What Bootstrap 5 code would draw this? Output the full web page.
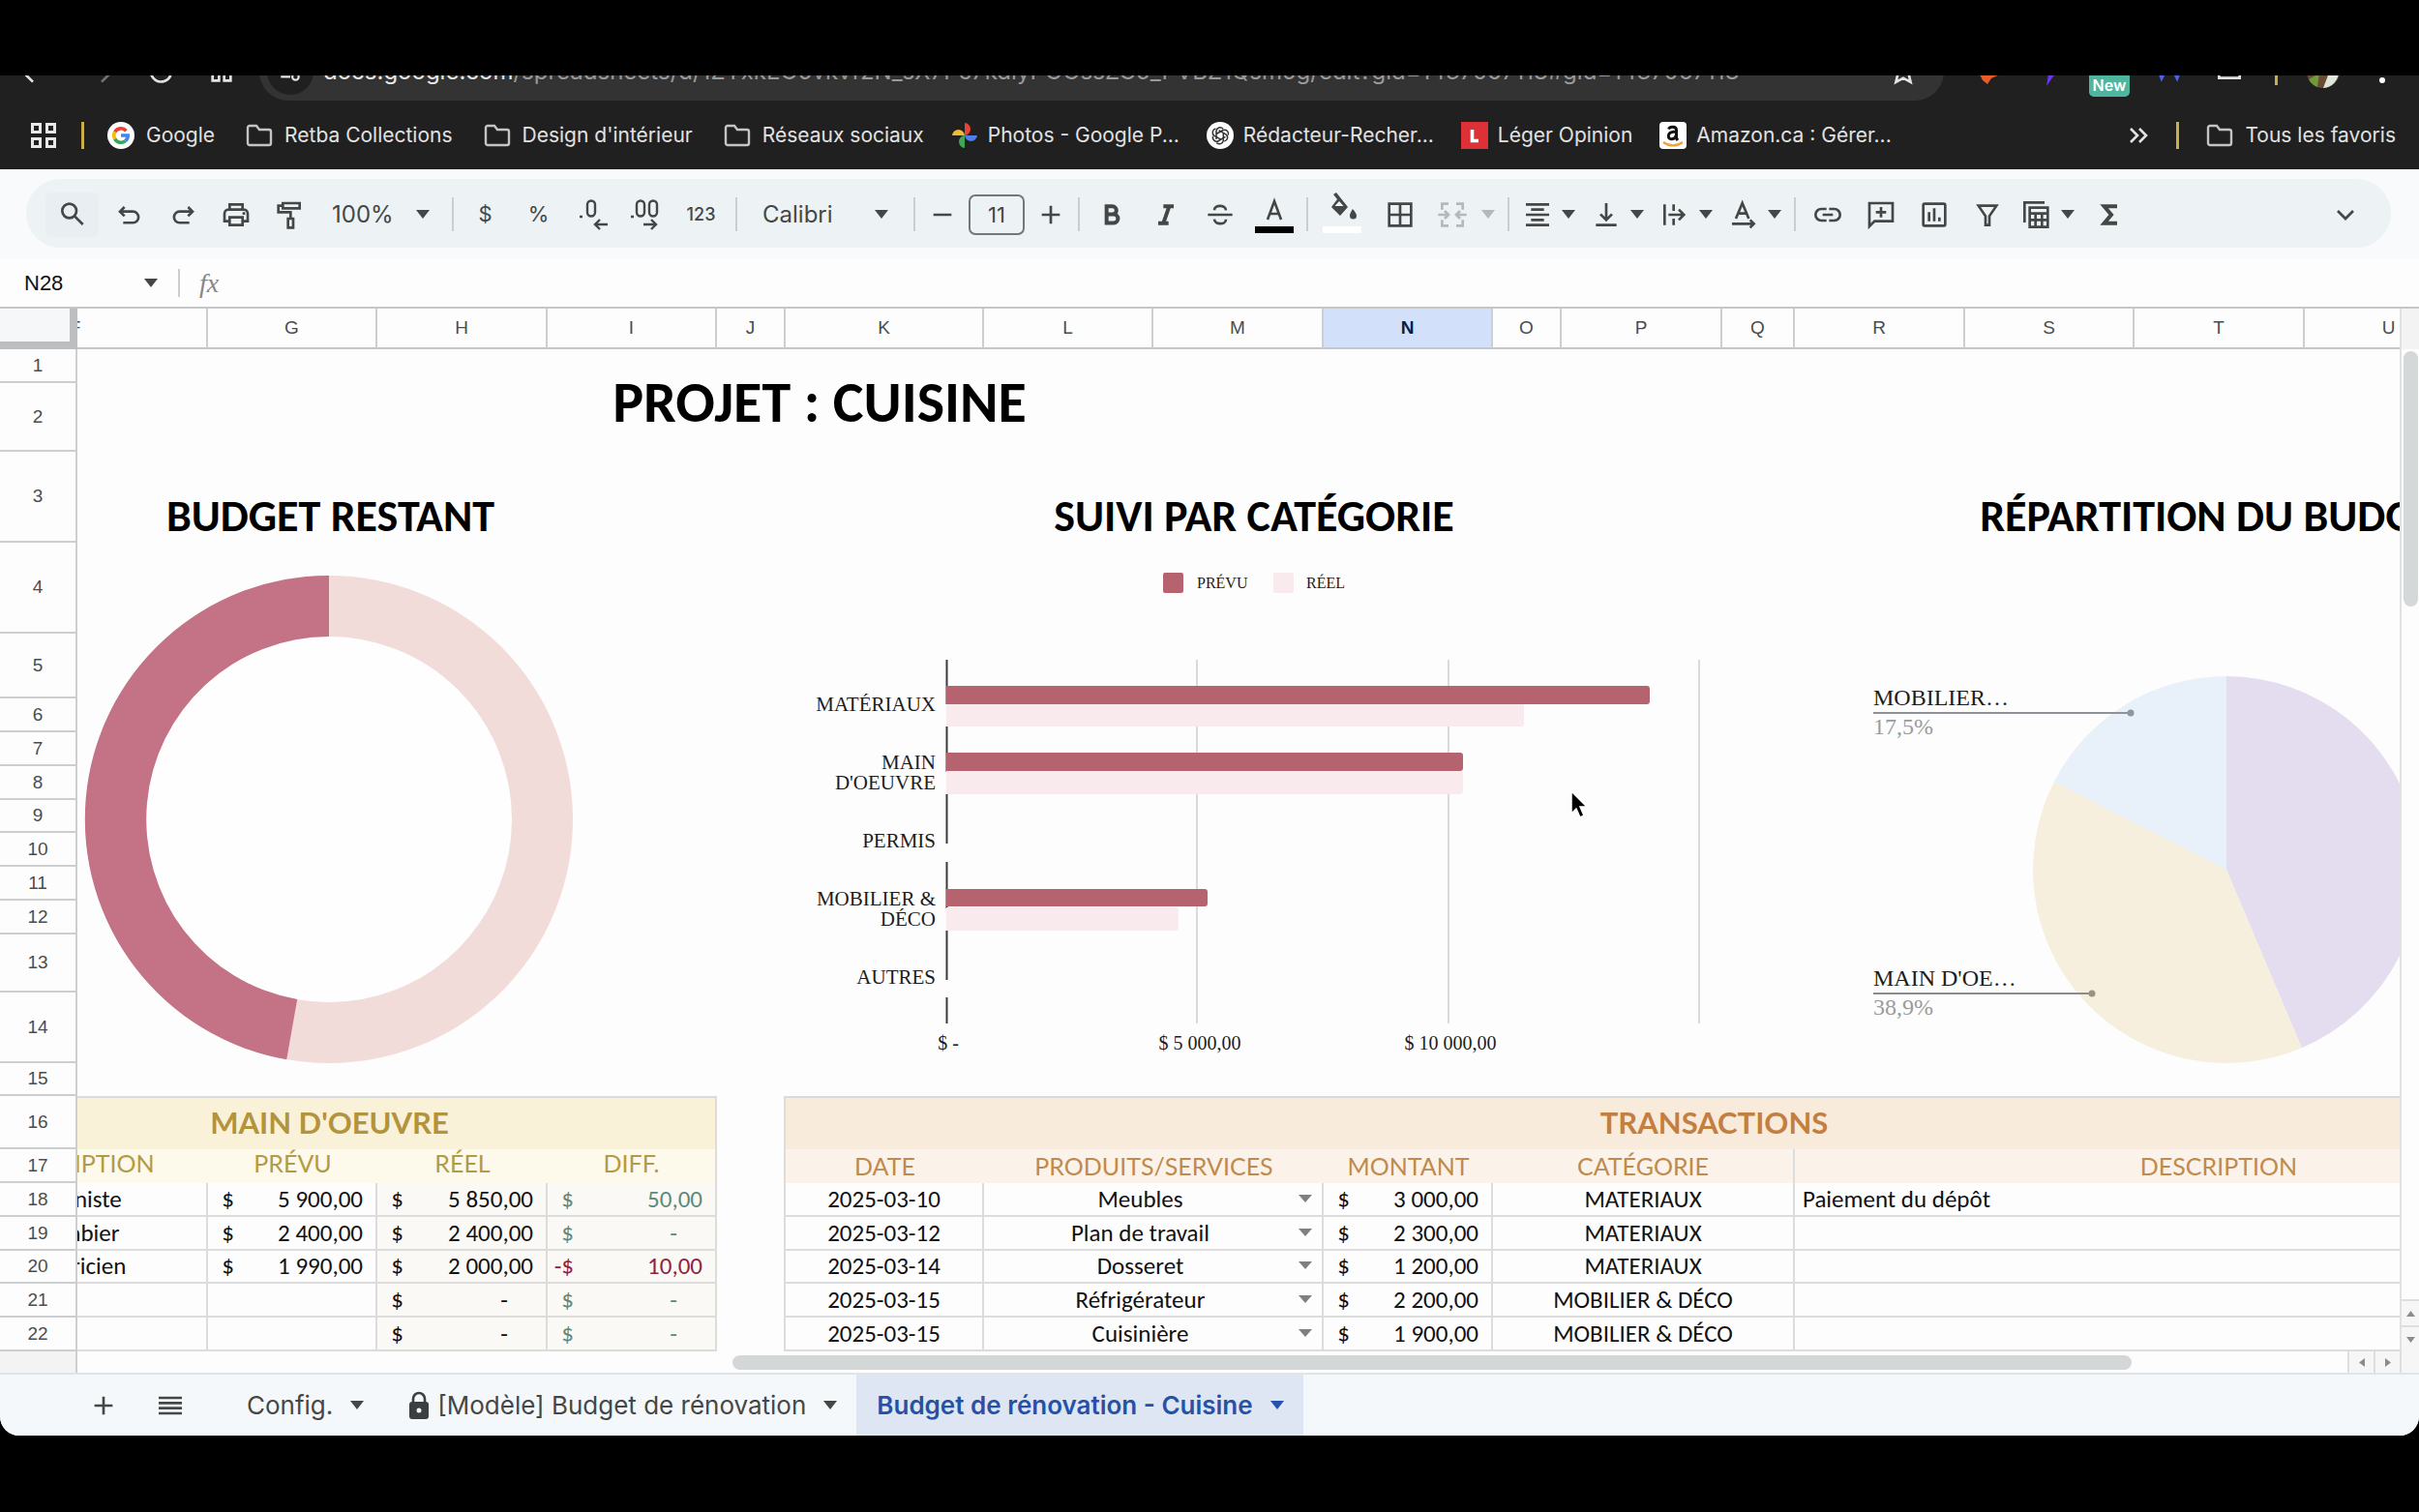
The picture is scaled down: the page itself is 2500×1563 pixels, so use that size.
<!DOCTYPE html>
<html lang="fr">
<head>
<meta charset="utf-8">
<meta name="viewport" content="width=device-width, initial-scale=1">
<title>Budget de rénovation - Cuisine</title>
<link href="https://cdn.jsdelivr.net/npm/bootstrap@5.3.0/dist/css/bootstrap.min.css" rel="stylesheet">
<style>
  body{background:#000;padding:78px 0 79px;font-family:Inter,"Liberation Sans",sans-serif;color:#444746;overflow-x:hidden}
  svg{display:block;flex:none}
  button,select,input{font-family:inherit;color:inherit}
  .app{background:#fdfdfd;border-radius:0 0 20px 20px;overflow:hidden}
  .ico{width:32px;height:32px;fill:none;stroke:currentColor;stroke-width:2}
  .caret{width:14px;height:9px;fill:currentColor}

  /* browser chrome */
  .browser{background:#202020;color:#e3e3e3;overflow:hidden}
  .nav-row{height:60px;margin-top:-34px;padding:0 8px 0 18px}
  .nav-btn{width:62px;padding:0;border:0;background:none;color:#e3e3e3;display:flex;justify-content:center}
  .address{background:#333;border-radius:30px;height:60px;padding:0 26px 0 8px;gap:10px}
  .site-info{width:48px;height:48px;border-radius:50%;background:#202020}
  .url{font-size:24px;color:#9a9a9a;white-space:nowrap}
  .url b{font-weight:400;color:#e8e8e8}
  .ext{width:62px}
  .new-tag{background:#4fb59f;color:#fff;font-size:16px;line-height:16px;font-weight:600;border-radius:5px;padding:8px 4px 4px}
  .marks{height:71px;padding:0 24px 0 30px;font-size:21px;gap:32px}
  .marks a{color:#e2e2e2;text-decoration:none;display:flex;align-items:center;gap:12px;white-space:nowrap}
  .marks a.site{gap:10px;margin-left:-4px}
  .rule{width:3px;height:28px;background:#c9ae4a}
  .marks .lead-rule{margin:0 -8px}

  /* toolbar */
  .tools-zone{background:#f8fafc;padding:10px 29px 12px 27px}
  .tools{background:#edf2f5;border-radius:36px;height:71px;padding:2px 20px 0}
  .tb{width:55px;height:46px;padding:0;border:0;border-radius:6px;background:none;display:flex;align-items:center;justify-content:center;font-size:22px;flex:none}
  .tb.find{background:#e9eef3;margin-right:4px}
  .tb.fmt{width:56px}
  .tb.cellfmt{width:60px}
  .tb.step{width:46px}
  .tb.num{width:61px;font-size:18px;font-weight:500}
  .tb-drop{width:71px;height:46px;padding:0 8px;border:0;background:none;display:flex;align-items:center;justify-content:space-between;flex:none}
  .tb-drop.roomy{width:76px;color:#b3b8ba}
  .combo{appearance:none;border:0;background:url("data:image/svg+xml,%3Csvg xmlns='http://www.w3.org/2000/svg' width='14' height='9'%3E%3Cpath d='M0 0h14L7 9z' fill='%23444746'/%3E%3C/svg%3E") no-repeat right 18px center;font-size:24px;padding:0 0 0 17px;height:46px;flex:none}
  .combo.zoom{width:136px}
  .combo.font{width:172px;padding-left:21px;background-position:right 21px center}
  .size-box{width:58px;height:42px;margin:0 4px;border:2px solid #747775;border-radius:7px;background:none;text-align:center;font-size:22px;padding:0}
  .split{width:2px;height:35px;margin:0 5px;background:#c9ced1;flex:none}

  /* formula bar */
  .fbar{height:51px;padding-left:17px;border-bottom:2px solid #c4c6c7;background:#fdfdfd}
  .name-box{width:132px;border:0;background:none;font-family:"Liberation Sans",Arial,sans-serif;font-size:22px;color:#111;padding:0 8px}
  .fx{font-family:"Liberation Serif",serif;font-style:italic;font-size:28px;color:#858789}
  .fbar .split{height:29px;margin:0 20px 0 21px}

  /* grid */
  .grid-view{overflow:hidden;flex:1 1 0;min-width:0}
  .sheet{width:2731px;table-layout:fixed;border-collapse:separate;border-spacing:0;font-family:Carlito,Lato,sans-serif;font-size:25px;line-height:30px;color:#111}
  .sheet th,.sheet td{padding:0;font-weight:400}
  .sheet .num-h,.sheet .col-h{font-family:"Liberation Sans",Arial,sans-serif;font-size:19px;line-height:22px;color:#4a4d4f;text-align:center;background:#fdfdfd}
  .sheet .num-h{border-bottom:2px solid #cccecf;border-right:2px solid #cccecf;vertical-align:middle}
  .sheet .col-h{height:42px;border-right:2px solid #cccecf;border-bottom:2px solid #c4c6c7}
  .sheet .col-h.on{background:#d3e0f9;color:#0b1d46;font-weight:700}
  .sheet .corner{background:#f5f7f9;border-right:8px solid #bcbec0;border-bottom:8px solid #bcbec0}
  .h35{height:35px}.h34{height:34px}.h71{height:71px}.h94{height:94px}.h67{height:67px}.h60{height:60px}.h73{height:73px}.h55{height:55px}
  .spill{overflow:hidden}
  .spill > div{margin-left:-138px;text-align:center;white-space:nowrap}
  .h-main{font-size:60px;line-height:64px;color:#000;text-align:center}
  .h-sec{font-size:46px;line-height:48px;color:#000;text-align:center;vertical-align:bottom}
  .sheet td.h-main,.sheet td.h-sec{font-weight:700}
  .sheet td.h-main{padding-top:4px}
  .sheet td.h-sec{padding-bottom:4px}
  .sheet .band{font-family:Lato,sans-serif;font-size:31px;line-height:40px;font-weight:700;text-align:center;border-top:2px solid #dcdad6;padding-bottom:4px}
  .sheet .sub{font-family:Lato,sans-serif;font-size:25px;line-height:28px;text-align:center}
  .sheet .y2,.sheet .o2{vertical-align:top}
  .sheet .o2{line-height:34px}
  .y1{background:#f9f2d9;color:#b3933b}
  .y2{background:#fdf9eb;color:#b39a45}
  .o1{background:#f8ebdc;color:#c27f40}
  .o2{background:#fbf3e9;color:#bf8a4c}
  .edge{border-right:2px solid #dcdcdc}
  .sheet .cl{border-right:2px solid #dcdcdc;border-bottom:2px solid #dcdcdc;text-align:center;white-space:nowrap}
  .calc{background:#fbf9f6}
  .money{display:flex;justify-content:space-between;padding:0 13px 0 3px}
  .cur{width:24px;text-align:right}
  .nil{padding-right:26px}
  .pos{color:#5d8a7a}
  .neg{color:#8f2440}
  .pick{appearance:none;border:0;width:100%;height:32px;padding:0 28px 0 2px;text-align:center;text-align-last:center;display:block;color:#111;background:url("data:image/svg+xml,%3Csvg xmlns='http://www.w3.org/2000/svg' width='14' height='8'%3E%3Cpath d='M0 0h14L7 8z' fill='%237d7f80'/%3E%3C/svg%3E") no-repeat right 10px top 11px}
  .chart text{font-family:"Liberation Serif",serif;font-size:20px;fill:#1c1c1c}
  .chart .lg text{font-size:16px}
  .chart .cat text{font-size:21px}
  .chart .pl text{font-size:24px}
  .chart .pl .pc{fill:#9b9b9b}

  /* scrollbars */
  .vbar{width:20px;border-left:2px solid #dfe1e2;background:#fdfdfd}
  .vbar .cap-top{height:42px;background:#f3f3f3}
  .vthumb{width:15px;height:264px;margin-top:2px;border-radius:8px;background:#d4d8d9}
  .sq{background:#f6f6f6;border:0 solid #dcdedf;color:#8a8c8d;padding:0;display:flex;align-items:center;justify-content:center}
  .vbar .sq{height:27px;border-top-width:2px}
  .hbar{height:24px;border-bottom:2px solid #e1e4e6}
  .hbar .foot{width:80px;background:#f3f3f3;border-right:2px solid #cccecf}
  .hthumb{height:15px;width:1446px;margin-right:223px;border-radius:8px;background:#d4d7d8}
  .hbar .sq{width:27px;border-left-width:2px}
  .hbar .sq.end{width:20px}

  /* sheet tabs */
  .tabs{background:#f5f8fa;height:63px;padding-left:72px;font-size:26px;color:#444746}
  .tabs button{border:0;background:none;padding:0;display:flex;align-items:center;white-space:nowrap}
  .tabs .mini{width:69px;justify-content:center}
  .tabs .tab{padding:0 20px 0 21px;gap:18px;font-weight:400}
  .tabs .tab.on{background:#dfe6f3;color:#2551a8;font-weight:600}
  .tabs .icon-text{gap:7px}
</style>
</head>
<body>
<svg width="0" height="0" class="position-absolute" aria-hidden="true">
  <defs>
    <symbol id="dn" viewBox="0 0 14 9"><path d="M0 0h14L7 9z"/></symbol>
    <symbol id="folder" viewBox="0 0 28 24"><path d="M2 20V4a2 2 0 0 1 2-2h7l3 4h10a2 2 0 0 1 2 2v12a2 2 0 0 1-2 2H4a2 2 0 0 1-2-2z" fill="none" stroke="#c4c4c4" stroke-width="2.4"/></symbol>
  </defs>
</svg>

<div class="app d-flex flex-column">

  <header class="browser">
    <div class="nav-row d-flex align-items-center">
      <button class="nav-btn" aria-label="Retour" style="width:32px"><svg class="ico" viewBox="0 0 24 24"><path d="M19 12H5M12 4l-8 8 8 8"/></svg></button>
      <button class="nav-btn ms-4 text-secondary" aria-label="Avancer"><svg class="ico" viewBox="0 0 24 24"><path d="M5 12h14M12 4l8 8-8 8"/></svg></button>
      <button class="nav-btn" aria-label="Actualiser"><svg class="ico" viewBox="0 0 24 24"><path d="M18 7a8 8 0 1 0 1 8M19 3v6h-6"/></svg></button>
      <button class="nav-btn me-2" aria-label="Accueil"><svg class="ico" viewBox="0 0 24 24"><path d="M5 10l7-6 7 6v9h-5v-7h-4v7H5z"/></svg></button>
      <div class="address d-flex align-items-center flex-fill">
        <span class="site-info d-flex align-items-center justify-content-center"><svg class="ico" style="width:26px" viewBox="0 0 24 24"><path d="M3 7h9M12 17h-9"/><circle cx="17" cy="7" r="3"/><circle cx="17" cy="17" r="3"/></svg></span>
        <span class="url flex-fill"><b>docs.google.com</b>/spreadsheets/d/1ZYxkEO5vkvf2N_sX7Pc7kdlyPOOssZG5_PVBZ1Qsm5g/edit?gid=1437067118#gid=1437067118</span>
        <svg class="ico" viewBox="0 0 24 24" stroke="#bbb"><path d="M12 3l2.700 6 6.300.6-4.800 4.300 1.500 6.300L12 17l-5.700 3.200 1.500-6.300L3 9.600 9.300 9z"/></svg>
      </div>
      <div class="d-flex align-items-center ps-3">
        <span class="ext d-flex justify-content-center"><svg width="26" height="34" viewBox="0 0 26 34"><path d="M3 8h20l1 12-9 4-4 6-5-4-3-6z" fill="#ea5b2a"/></svg></span>
        <span class="ext d-flex justify-content-center"><svg width="22" height="36" viewBox="0 0 22 36"><path d="M12 2L2 21h8L8 33l12-17h-8z" fill="#6c35f0"/></svg></span>
        <span class="ext d-flex justify-content-center pt-4"><span class="new-tag">New</span></span>
        <span class="ext d-flex justify-content-center"><svg width="32" height="30" viewBox="0 0 32 30" fill="none" stroke="#4a63e6" stroke-width="3"><path d="M2 6l6 16 8-16 8 16 6-16"/></svg></span>
        <span class="ext d-flex justify-content-center"><svg class="ico" viewBox="0 0 24 24"><path d="M4 17V6h5a3 3 0 0 1 6 0h5v11z"/></svg></span>
        <span class="rule ms-3 me-3"></span>
        <span class="ext d-flex justify-content-center"><svg width="36" height="36" viewBox="0 0 36 36"><circle cx="18" cy="18" r="17" fill="#6b4a34"/><path d="M18 35a17 17 0 0 0 16-17l-8-4z" fill="#dfe7dc"/><path d="M3 26a17 17 0 0 0 9 8l2-14z" fill="#6f9a3a"/></svg></span>
        <svg width="60" height="36" viewBox="0 0 60 36" fill="#fff"><circle cx="30" cy="8" r="3"/><circle cx="30" cy="17" r="3"/><circle cx="30" cy="27" r="3"/></svg>
      </div>
    </div>
    <nav class="marks d-flex align-items-center" aria-label="Favoris">
      <svg width="30" height="28" viewBox="0 0 30 28" fill="none" stroke="#e8e8e8" stroke-width="3"><path d="M3.500 2.500h8v8h-8zM18.500 2.500h8v8h-8zM3.500 17.500h8v8h-8zM18.500 17.500h8v8h-8z"/></svg>
      <span class="rule lead-rule"></span>
      <a href="#"><svg width="28" height="28" viewBox="0 0 28 28" fill="none" stroke-width="3.600"><circle cx="14" cy="14" r="14" fill="#fff"/><path d="M19.400 9.200A7.300 7.300 0 0 0 7.700 10.400" stroke="#ea4335"/><path d="M7.700 10.400a7.300 7.300 0 0 0 0 7.200" stroke="#fbbc05"/><path d="M7.700 17.600a7.300 7.300 0 0 0 11 2" stroke="#34a853"/><path d="M18.700 19.600a7.300 7.300 0 0 0 2.500-5.600H14" stroke="#4285f4"/></svg>Google</a>
      <a href="#"><svg width="28" height="24"><use href="#folder"/></svg>Retba Collections</a>
      <a href="#"><svg width="28" height="24"><use href="#folder"/></svg>Design d'intérieur</a>
      <a href="#"><svg width="28" height="24"><use href="#folder"/></svg>Réseaux sociaux</a>
      <a href="#" class="site"><svg width="28" height="28" viewBox="0 0 28 28"><path d="M14 1a6.500 6.500 0 0 1 6 6.500 6.500 6.500 0 0 1-6 6.500z" fill="#e94335"/><path d="M27 14a6.500 6.500 0 0 1-6.500 6 6.500 6.500 0 0 1-6.500-6z" fill="#4f7fe8"/><path d="M14 27a6.500 6.500 0 0 1-6-6.500A6.500 6.500 0 0 1 14 14z" fill="#43a456"/><path d="M1 14a6.500 6.500 0 0 1 6.500-6 6.500 6.500 0 0 1 6.500 6z" fill="#efbb34"/></svg>Photos - Google P...</a>
      <a href="#" class="site"><svg width="28" height="28" viewBox="0 0 28 28" fill="none" stroke="#333" stroke-width="1.500"><circle cx="14" cy="14" r="14" fill="#fff" stroke="none"/><g id="knot"><path d="M10 18V9.500a4 4 0 0 1 7-2.300M10 12.500l7-4a4 4 0 0 1 5.300 5"/></g><use href="#knot" transform="rotate(120 14 14)"/><use href="#knot" transform="rotate(240 14 14)"/></svg>Rédacteur-Recher...</a>
      <a href="#" class="site"><svg width="28" height="28" viewBox="0 0 28 28"><path d="M0 0h28v28H0z" fill="#dc3237"/><path d="M11.500 8v11.500H18" fill="none" stroke="#fff" stroke-width="3.600"/></svg>Léger Opinion</a>
      <a href="#" class="site"><svg width="28" height="28" viewBox="0 0 28 28" fill="none"><rect width="28" height="28" rx="4" fill="#fff"/><path d="M9.500 7.500c1-3 8-3.500 8 .8V17l1.500 2M17.300 10c-4 0-8 .6-8 4.600 0 4.600 7 4.200 8-.8" stroke="#111" stroke-width="3"/><path d="M4 21c6 4.500 14 4.500 20 0" stroke="#f0a33a" stroke-width="2.400"/></svg>Amazon.ca : Gérer...</a>
      <div class="ms-auto d-flex align-items-center gap-4">
        <svg width="22" height="18" viewBox="0 0 22 18" fill="none" stroke="#e3e3e3" stroke-width="2.600"><path d="M3 2l7 7-7 7M12 2l7 7-7 7"/></svg>
        <span class="rule ms-1 me-1"></span>
        <a href="#"><svg width="28" height="24"><use href="#folder"/></svg>Tous les favoris</a>
      </div>
    </nav>
  </header>

  <div class="tools-zone">
    <div class="tools d-flex align-items-center" role="toolbar" aria-label="Outils">
      <button class="tb find" aria-label="Menus"><svg class="ico" viewBox="0 0 24 24"><circle cx="9.500" cy="9" r="5.500"/><path d="M13.500 13l6.500 6.500"/></svg></button>
      <button class="tb" aria-label="Annuler"><svg class="ico" viewBox="0 0 24 24"><path d="M8 6L4.500 9.500 8 13M5 9.500h9.500a4.300 4.300 0 0 1 0 8.700H7"/></svg></button>
      <button class="tb" aria-label="Rétablir"><svg class="ico" viewBox="0 0 24 24"><path d="M16 6l3.500 3.500L16 13M19 9.500H9.500a4.300 4.300 0 0 0 0 8.700H17"/></svg></button>
      <button class="tb" aria-label="Imprimer"><svg class="ico" viewBox="0 0 24 24"><path d="M7 8V4h10v4M7 17H3v-6a3 3 0 0 1 3-3h12a3 3 0 0 1 3 3v6h-4M7 14h10v6H7zM17 11h2"/></svg></button>
      <button class="tb" aria-label="Copier la mise en forme"><svg class="ico" viewBox="0 0 24 24"><path d="M7 3h13v4H7zM7 5H3.500v5H13v5M11 15h4v7h-4z"/></svg></button>
      <select class="combo zoom" aria-label="Zoom"><option>100%</option></select>
      <span class="split"></span>
      <button class="tb" aria-label="Devise">$</button>
      <button class="tb" aria-label="Pourcentage">%</button>
      <button class="tb" aria-label="Moins de décimales"><svg width="36" height="32" viewBox="0 0 36 32" fill="none" stroke="currentColor" stroke-width="2.400"><path d="M5 18h3M13 5.500a4 4 0 0 1 8 0v8a4 4 0 0 1-8 0zM34 26H21M26 21l-5 5 5 5"/></svg></button>
      <button class="tb" aria-label="Plus de décimales"><svg width="36" height="32" viewBox="0 0 36 32" fill="none" stroke="currentColor" stroke-width="2.400"><path d="M3 18h3M9 5.500a4 4 0 0 1 8 0v8a4 4 0 0 1-8 0zM22 5.500a4 4 0 0 1 8 0v8a4 4 0 0 1-8 0zM16 26h13M24 21l5 5-5 5"/></svg></button>
      <button class="tb num" aria-label="Autres formats">123</button>
      <span class="split"></span>
      <select class="combo font" aria-label="Police"><option>Calibri</option></select>
      <span class="split"></span>
      <button class="tb step" aria-label="Réduire la police"><svg class="ico" viewBox="0 0 24 24"><path d="M5 12h14"/></svg></button>
      <input class="size-box" aria-label="Taille de police" value="11">
      <button class="tb step" aria-label="Agrandir la police"><svg class="ico" viewBox="0 0 24 24"><path d="M5 12h14M12 5v14"/></svg></button>
      <span class="split"></span>
      <button class="tb fmt" aria-label="Gras"><svg class="ico" viewBox="0 0 24 24" style="stroke-width:3"><path d="M8 5.500h4.500a3 3 0 0 1 0 6.200H8zM8 11.700h5.500a3.300 3.300 0 0 1 0 6.600H8z"/></svg></button>
      <button class="tb fmt" aria-label="Italique"><svg class="ico" viewBox="0 0 24 24" style="stroke-width:3"><path d="M10 5.500h8M6 18.500h8M14.500 5.500l-4.500 13"/></svg></button>
      <button class="tb fmt" aria-label="Barré"><svg class="ico" viewBox="0 0 24 24"><path d="M2.500 12h19M16.500 8.500c-.3-4.500-9-4.500-9 0M7.500 15.500c.3 4.500 9 4.500 9 0"/></svg></button>
      <button class="tb fmt" aria-label="Couleur du texte"><svg width="42" height="42" viewBox="0 0 42 42" fill="none" stroke="currentColor" stroke-width="2.600"><path d="M14 26l7-19 7 19M16 20h10"/><path d="M1 33h40v7H1z" fill="#000" stroke="none"/></svg></button>
      <span class="split"></span>
      <button class="tb cellfmt" aria-label="Couleur de remplissage"><svg width="42" height="48" viewBox="0 0 42 48"><path d="M12 3l3-2 12 15-8 9-9-9 6-8zM13.500 15h9L18 10z" fill="currentColor" fill-rule="evenodd"/><path d="M32 18s4 4.500 4 7a3.500 3.500 0 0 1-7 0c0-2.500 3-7 3-7z" fill="currentColor"/><path d="M1 36h40v7H1z" fill="#fff"/></svg></button>
      <button class="tb cellfmt" aria-label="Bordures"><svg class="ico" viewBox="0 0 24 24"><path d="M3.500 3.500h17v17h-17zM12 3.500v17M3.500 12h17"/></svg></button>
      <button class="tb-drop roomy" aria-label="Fusionner"><svg class="ico" viewBox="0 0 24 24"><path d="M9 3.500H4V8M15 3.500h5V8M9 20.500H4V16M15 20.500h5V16M1 12h8M6 9l3 3-3 3M23 12h-8M18 9l-3 3 3 3"/></svg><svg class="caret"><use href="#dn"/></svg></button>
      <span class="split"></span>
      <button class="tb-drop" aria-label="Alignement horizontal"><svg class="ico" viewBox="0 0 24 24"><path d="M3 4h18M7 8h10M3 12h18M7 16h10M3 20h18"/></svg><svg class="caret"><use href="#dn"/></svg></button>
      <button class="tb-drop" aria-label="Alignement vertical"><svg class="ico" viewBox="0 0 24 24"><path d="M4 20h16M12 3v13M7.500 11.500L12 16l4.500-4.500"/></svg><svg class="caret"><use href="#dn"/></svg></button>
      <button class="tb-drop" aria-label="Retour à la ligne"><svg class="ico" viewBox="0 0 24 24"><path d="M4 4v16M11 4v5M11 15v5M7 12h12M15 8l4 4-4 4"/></svg><svg class="caret"><use href="#dn"/></svg></button>
      <button class="tb-drop" aria-label="Rotation du texte"><svg class="ico" viewBox="0 0 24 24"><path d="M6 15l5-12 5 12M7.500 11h7M3 19h17M17 16l3 3-3 3"/></svg><svg class="caret"><use href="#dn"/></svg></button>
      <span class="split"></span>
      <button class="tb" aria-label="Lien"><svg class="ico" viewBox="0 0 24 24"><path d="M11 7.500H7a4.500 4.500 0 0 0 0 9h4M13 7.500h4a4.500 4.500 0 0 1 0 9h-4M8 12h8"/></svg></button>
      <button class="tb" aria-label="Commentaire"><svg class="ico" viewBox="0 0 24 24"><path d="M3 21V3h18v14H7zM12 6v8M8 10h8"/></svg></button>
      <button class="tb" aria-label="Graphique"><svg class="ico" viewBox="0 0 24 24"><rect x="3.500" y="3.500" width="17" height="17" rx="1"/><path d="M8 10v7M12 7v10M16 14v3"/></svg></button>
      <button class="tb" aria-label="Filtre"><svg class="ico" viewBox="0 0 24 24"><path d="M5 5h14l-5.500 8v7h-3v-7z"/></svg></button>
      <button class="tb-drop" aria-label="Tableaux"><svg class="ico" viewBox="0 0 24 24"><path d="M2.500 18V2.500H18M6.500 6.500h14v15h-14zM6.500 11h14M6.500 16h14M11 11v10M16 11v10"/></svg><svg class="caret"><use href="#dn"/></svg></button>
      <button class="tb" aria-label="Fonctions"><svg class="ico" viewBox="0 0 24 24" style="stroke-width:3"><path d="M18 5.500H8l5.500 6.500L8 18.500h10"/></svg></button>
      <button class="tb ms-auto" aria-label="Masquer les menus"><svg class="ico" viewBox="0 0 24 24"><path d="M6 9l6 6 6-6"/></svg></button>
    </div>
  </div>

  <div class="fbar d-flex align-items-center">
    <input class="name-box" aria-label="Zone de nom" value="N28">
    <svg class="caret"><use href="#dn"/></svg>
    <span class="split"></span>
    <span class="fx">fx</span>
  </div>

  <main class="d-flex">
    <div class="grid-view">
      <table class="sheet">
        <colgroup>
          <col style="width:80px"><col style="width:135px"><col style="width:175px"><col style="width:176px"><col style="width:175px"><col style="width:71px"><col style="width:205px"><col style="width:175px"><col style="width:176px"><col style="width:175px"><col style="width:71px"><col style="width:166px"><col style="width:75px"><col style="width:176px"><col style="width:175px"><col style="width:176px"><col style="width:175px"><col style="width:174px">
        </colgroup>
        <thead>
          <tr><th class="col-h corner"></th><th class="col-h"><div class="spill"><div>F</div></div></th><th class="col-h">G</th><th class="col-h">H</th><th class="col-h">I</th><th class="col-h">J</th><th class="col-h">K</th><th class="col-h">L</th><th class="col-h">M</th><th class="col-h on">N</th><th class="col-h">O</th><th class="col-h">P</th><th class="col-h">Q</th><th class="col-h">R</th><th class="col-h">S</th><th class="col-h">T</th><th class="col-h">U</th><th class="col-h"></th></tr>
        </thead>
        <tbody>
          <tr><th class="num-h h35">1</th><td colspan="10" rowspan="2" class="h-main">PROJET : CUISINE</td><td colspan="7"></td></tr>
          <tr><th class="num-h h71">2</th><td colspan="7"></td></tr>
          <tr><th class="num-h h94">3</th><td colspan="4" class="h-sec"><div class="spill"><div>BUDGET RESTANT</div></div></td><td></td><td colspan="6" class="h-sec">SUIVI PAR CATÉGORIE</td><td></td><td colspan="5" class="h-sec">RÉPARTITION DU BUDGET</td></tr>
          <tr><th class="num-h h94">4</th>
            <td colspan="17" rowspan="12" class="align-top">
              <div class="d-flex">
                <svg class="chart" width="732" height="570" viewBox="80 561 732 570">
                  <circle cx="340" cy="847" r="220.500" fill="#fefefe" stroke="#f2dcd9" stroke-width="63"/>
                  <path d="M340 595A252 252 0 0 0 296.200 1095.200L307.200 1033.100A189 189 0 0 1 340 658z" fill="#c47285"/>
                </svg>
                <svg class="chart" width="1043" height="570" viewBox="812 561 1043 570">
                  <g class="lg"><rect x="1202" y="592" width="21" height="21" rx="2" fill="#b5636e"/><text x="1237" y="608">PRÉVU</text><rect x="1316" y="592" width="21" height="21" rx="2" fill="#f9ebed"/><text x="1350" y="608">RÉEL</text></g>
                  <path d="M1237 682v376M1497 682v376M1756 682v376" stroke="#dadada" stroke-width="2"/>
                  <path d="M978.500 682v46M978.500 751v47M978.500 821v51M978.500 891v48M978.500 962v51M978.500 1031v27" stroke="#3a3a3a" stroke-width="2"/>
                  <g fill="#f9ebed"><path d="M978 727h594q3 0 3 3v18q0 3-3 3H978zM978 797h531q3 0 3 3v18q0 3-3 3H978zM978 938h237q3 0 3 3v18q0 3-3 3H978z"/></g>
                  <g fill="#b5636e"><path d="M978 709h724q3 0 3 3v13q0 3-3 3H978zM978 778h531q3 0 3 3v13q0 3-3 3H978zM978 919h267q3 0 3 3v12q0 3-3 3H978z"/></g>
                  <g class="cat" text-anchor="end"><text x="967" y="735">MATÉRIAUX</text><text x="967" y="795">MAIN</text><text x="967" y="816">D'OEUVRE</text><text x="967" y="876">PERMIS</text><text x="967" y="936">MOBILIER &amp;</text><text x="967" y="957">DÉCO</text><text x="967" y="1017">AUTRES</text></g>
                  <g text-anchor="middle"><text x="980" y="1085">$ -</text><text x="1240" y="1085">$ 5 000,00</text><text x="1499" y="1085">$ 10 000,00</text></g>
                  <path d="M1624 818v23l5-5 4 9 4-2-4-9h7z" fill="#000" stroke="#fff" stroke-width="1.500"/>
                </svg>
                <svg class="chart" width="701" height="570" viewBox="1855 561 701 570">
                  <path d="M2301 899V699A200 200 0 0 1 2378.800 1083.200z" fill="#e4ddef"/>
                  <path d="M2301 899L2378.800 1083.200A200 200 0 0 1 2123 807.900z" fill="#f6efde"/>
                  <path d="M2301 899L2123 807.900A200 200 0 0 1 2301 699z" fill="#e8f0fa"/>
                  <g class="pl"><text x="1936" y="729">MOBILIER…</text><text class="pc" x="1936" y="759">17,5%</text><path d="M1936 737h265" stroke="#8d9298" stroke-width="2"/><circle cx="2202" cy="737" r="3.500" fill="#8d96a1"/>
                  <text x="1936" y="1019">MAIN D'OE…</text><text class="pc" x="1936" y="1049">38,9%</text><path d="M1936 1027h225" stroke="#8d8d8d" stroke-width="2"/><circle cx="2162" cy="1027" r="3.500" fill="#99927c"/></g>
                </svg>
              </div>
            </td></tr>
          <tr><th class="num-h h67">5</th></tr>
          <tr><th class="num-h h35">6</th></tr>
          <tr><th class="num-h h35">7</th></tr>
          <tr><th class="num-h h35">8</th></tr>
          <tr><th class="num-h h34">9</th></tr>
          <tr><th class="num-h h35">10</th></tr>
          <tr><th class="num-h h35">11</th></tr>
          <tr><th class="num-h h35">12</th></tr>
          <tr><th class="num-h h60">13</th></tr>
          <tr><th class="num-h h73">14</th></tr>
          <tr><th class="num-h h34">15</th></tr>
          <tr><th class="num-h h55">16</th><td colspan="4" class="band y1 edge"><div class="spill"><div>MAIN D'OEUVRE</div></div></td><td class="edge"></td><td colspan="12" class="band o1">TRANSACTIONS</td></tr>
          <tr><th class="num-h h35">17</th><td class="sub y2"><div class="spill"><div>DESCRIPTION</div></div></td><td class="sub y2">PRÉVU</td><td class="sub y2">RÉEL</td><td class="sub y2 edge">DIFF.</td><td class="edge"></td><td class="sub o2">DATE</td><td colspan="2" class="sub o2">PRODUITS/SERVICES</td><td class="sub o2">MONTANT</td><td colspan="3" class="sub o2 edge">CATÉGORIE</td><td colspan="5" class="sub o2">DESCRIPTION</td></tr>
          <tr><th class="num-h h35">18</th><td class="cl"><div class="spill"><div>Cuisiniste</div></div></td><td class="cl"><div class="money"><span class="cur">$</span><span>5 900,00</span></div></td><td class="cl calc"><div class="money"><span class="cur">$</span><span>5 850,00</span></div></td><td class="cl calc"><div class="money pos"><span class="cur">$</span><span>50,00</span></div></td><td class="edge"></td><td class="cl">2025-03-10</td><td colspan="2" class="cl"><select class="pick" aria-label="Produit 1"><option>Meubles</option></select></td><td class="cl"><div class="money"><span class="cur">$</span><span>3 000,00</span></div></td><td colspan="3" class="cl">MATERIAUX</td><td colspan="5" class="cl text-start"><div class="ps-2">Paiement du dépôt</div></td></tr>
          <tr><th class="num-h h35">19</th><td class="cl"><div class="spill"><div>Plombier</div></div></td><td class="cl"><div class="money"><span class="cur">$</span><span>2 400,00</span></div></td><td class="cl calc"><div class="money"><span class="cur">$</span><span>2 400,00</span></div></td><td class="cl calc"><div class="money pos"><span class="cur">$</span><span class="nil">-</span></div></td><td class="edge"></td><td class="cl">2025-03-12</td><td colspan="2" class="cl"><select class="pick" aria-label="Produit 2"><option>Plan de travail</option></select></td><td class="cl"><div class="money"><span class="cur">$</span><span>2 300,00</span></div></td><td colspan="3" class="cl">MATERIAUX</td><td colspan="5" class="cl"></td></tr>
          <tr><th class="num-h h34">20</th><td class="cl"><div class="spill"><div>Électricien</div></div></td><td class="cl"><div class="money"><span class="cur">$</span><span>1 990,00</span></div></td><td class="cl calc"><div class="money"><span class="cur">$</span><span>2 000,00</span></div></td><td class="cl calc"><div class="money neg"><span class="cur">-$</span><span>10,00</span></div></td><td class="edge"></td><td class="cl">2025-03-14</td><td colspan="2" class="cl"><select class="pick" aria-label="Produit 3"><option>Dosseret</option></select></td><td class="cl"><div class="money"><span class="cur">$</span><span>1 200,00</span></div></td><td colspan="3" class="cl">MATERIAUX</td><td colspan="5" class="cl"></td></tr>
          <tr><th class="num-h h35">21</th><td class="cl"></td><td class="cl"></td><td class="cl calc"><div class="money"><span class="cur">$</span><span class="nil">-</span></div></td><td class="cl calc"><div class="money pos"><span class="cur">$</span><span class="nil">-</span></div></td><td class="edge"></td><td class="cl">2025-03-15</td><td colspan="2" class="cl"><select class="pick" aria-label="Produit 4"><option>Réfrigérateur</option></select></td><td class="cl"><div class="money"><span class="cur">$</span><span>2 200,00</span></div></td><td colspan="3" class="cl">MOBILIER &amp; DÉCO</td><td colspan="5" class="cl"></td></tr>
          <tr><th class="num-h h35">22</th><td class="cl"></td><td class="cl"></td><td class="cl calc"><div class="money"><span class="cur">$</span><span class="nil">-</span></div></td><td class="cl calc"><div class="money pos"><span class="cur">$</span><span class="nil">-</span></div></td><td class="edge"></td><td class="cl">2025-03-15</td><td colspan="2" class="cl"><select class="pick" aria-label="Produit 5"><option>Cuisinière</option></select></td><td class="cl"><div class="money"><span class="cur">$</span><span>1 900,00</span></div></td><td colspan="3" class="cl">MOBILIER &amp; DÉCO</td><td colspan="5" class="cl"></td></tr>
        </tbody>
      </table>
    </div>
    <div class="vbar d-flex flex-column">
      <div class="cap-top"></div>
      <div class="vthumb mx-auto"></div>
      <button class="sq mt-auto" aria-label="Défiler vers le haut"><svg width="9" height="6" fill="currentColor"><path d="M0 6h9L4.500 0z"/></svg></button>
      <button class="sq" aria-label="Défiler vers le bas"><svg width="9" height="6" fill="currentColor"><path d="M0 0h9L4.500 6z"/></svg></button>
    </div>
  </main>

  <div class="hbar d-flex align-items-center">
    <div class="foot align-self-stretch"></div>
    <div class="flex-fill"></div>
    <div class="hthumb"></div>
    <div class="d-flex align-self-stretch">
      <button class="sq" aria-label="Défiler à gauche"><svg width="6" height="9" fill="currentColor"><path d="M6 0v9L0 4.500z"/></svg></button>
      <button class="sq" aria-label="Défiler à droite"><svg width="6" height="9" fill="currentColor"><path d="M0 0v9l6-4.500z"/></svg></button>
      <span class="sq end"></span>
    </div>
  </div>

  <footer class="tabs d-flex">
    <button class="mini" aria-label="Ajouter une feuille"><svg class="ico" viewBox="0 0 24 24"><path d="M5 12h14M12 5v14"/></svg></button>
    <button class="mini" aria-label="Toutes les feuilles"><svg class="ico" viewBox="0 0 24 24"><path d="M3 6h18M3 10h18M3 14h18M3 18h18"/></svg></button>
    <button class="tab ms-4">Config.<svg class="caret"><use href="#dn"/></svg></button>
    <button class="tab ms-1"><span class="icon-text d-flex align-items-center"><svg width="24" height="30" viewBox="0 0 24 30"><path d="M6 12V8a6 6 0 0 1 12 0v4" fill="none" stroke="#3c3f40" stroke-width="2.600"/><rect x="2" y="11" width="20" height="18" rx="3" fill="#3c3f40"/><circle cx="12" cy="20" r="2.500" fill="#f5f8fa"/></svg>[Modèle] Budget de rénovation</span><svg class="caret"><use href="#dn"/></svg></button>
    <button class="tab on">Budget de rénovation - Cuisine<svg class="caret"><use href="#dn"/></svg></button>
  </footer>
</div>
<script src="https://cdn.jsdelivr.net/npm/bootstrap@5.3.0/dist/js/bootstrap.bundle.min.js"></script>
</body>
</html>
